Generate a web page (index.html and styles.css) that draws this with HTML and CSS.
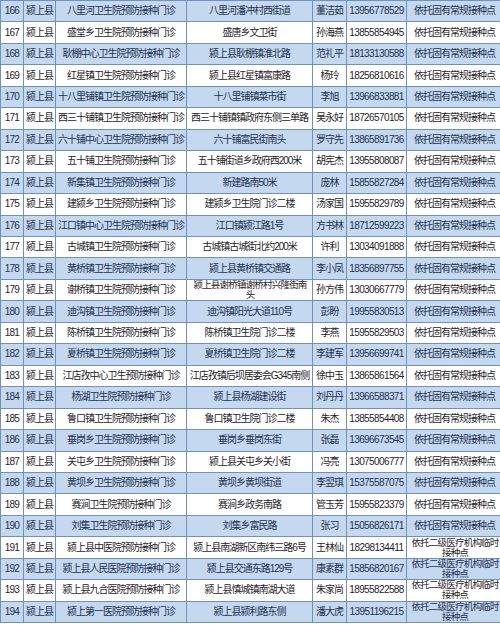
FILE: index.html
```html
<!DOCTYPE html>
<html lang="zh-CN">
<head>
<meta charset="utf-8">
<title>颍上县预防接种门诊</title>
<link rel="stylesheet" href="styles.css">
</head>
<body>
<div class="sheet">
<table class="grid">
<colgroup>
<col class="c-no"><col class="c-county"><col class="c-name"><col class="c-addr"><col class="c-person"><col class="c-phone"><col class="c-type">
</colgroup>
<tbody>
<tr class="alt"><td class="num">166</td><td>颍上县</td><td>八里河卫生院预防接种门诊</td><td>八里河潘冲村西街道</td><td>董洁茹</td><td class="phone">13956778529</td><td>依托固有常规接种点</td></tr>
<tr><td class="num">167</td><td>颍上县</td><td>盛堂乡卫生院预防接种门诊</td><td>盛唐乡文卫街</td><td>孙海燕</td><td class="phone">13855854945</td><td>依托固有常规接种点</td></tr>
<tr class="alt"><td class="num">168</td><td>颍上县</td><td>耿棚中心卫生院预防接种门诊</td><td>颍上县耿棚镇淮北路</td><td>范礼平</td><td class="phone">18133130588</td><td>依托固有常规接种点</td></tr>
<tr><td class="num">169</td><td>颍上县</td><td>红星镇卫生院预防接种门诊</td><td>颍上县红星镇富康路</td><td>杨玲</td><td class="phone">18256810616</td><td>依托固有常规接种点</td></tr>
<tr class="alt"><td class="num">170</td><td>颍上县</td><td>十八里铺镇卫生院预防接种门诊</td><td>十八里铺镇菜市街</td><td>李旭</td><td class="phone">13966833881</td><td>依托固有常规接种点</td></tr>
<tr><td class="num">171</td><td>颍上县</td><td>西三十铺镇卫生院预防接种门诊</td><td>西三十铺镇镇政府东侧三单路</td><td>吴永好</td><td class="phone">18726570105</td><td>依托固有常规接种点</td></tr>
<tr class="alt"><td class="num">172</td><td>颍上县</td><td>六十铺中心卫生院预防接种门诊</td><td>六十铺富民街南头</td><td>罗守先</td><td class="phone">13865891736</td><td>依托固有常规接种点</td></tr>
<tr><td class="num">173</td><td>颍上县</td><td>五十铺卫生院预防接种门诊</td><td>五十铺街道乡政府西200米</td><td>胡宪杰</td><td class="phone">13955808087</td><td>依托固有常规接种点</td></tr>
<tr class="alt"><td class="num">174</td><td>颍上县</td><td>新集镇卫生院预防接种门诊</td><td>新建路南50米</td><td>庞林</td><td class="phone">15855827284</td><td>依托固有常规接种点</td></tr>
<tr><td class="num">175</td><td>颍上县</td><td>建颍乡卫生院预防接种门诊</td><td>建颍乡卫生院门诊二楼</td><td>汤家国</td><td class="phone">15955829789</td><td>依托固有常规接种点</td></tr>
<tr class="alt"><td class="num">176</td><td>颍上县</td><td>江口镇中心卫生院预防接种门诊</td><td>江口镇颍江路1号</td><td>方书林</td><td class="phone">18712599223</td><td>依托固有常规接种点</td></tr>
<tr><td class="num">177</td><td>颍上县</td><td>古城镇卫生院预防接种门诊</td><td>古城镇古城街北约200米</td><td>许利</td><td class="phone">13034091888</td><td>依托固有常规接种点</td></tr>
<tr class="alt"><td class="num">178</td><td>颍上县</td><td>黄桥镇卫生院预防接种门诊</td><td>颍上县黄桥镇交通路</td><td>李小凤</td><td class="phone">18356897755</td><td>依托固有常规接种点</td></tr>
<tr><td class="num">179</td><td>颍上县</td><td>谢桥镇卫生院预防接种门诊</td><td class="two">颍上县谢桥镇谢桥村兴隆街南<br>头</td><td>孙方伟</td><td class="phone">13030667779</td><td>依托固有常规接种点</td></tr>
<tr class="alt"><td class="num">180</td><td>颍上县</td><td>迪沟镇卫生院预防接种门诊</td><td>迪沟镇阳光大道110号</td><td>彭盼</td><td class="phone">19955830513</td><td>依托固有常规接种点</td></tr>
<tr><td class="num">181</td><td>颍上县</td><td>陈桥镇卫生院预防接种门诊</td><td>陈桥镇卫生院门诊二楼</td><td>李燕</td><td class="phone">15955829503</td><td>依托固有常规接种点</td></tr>
<tr class="alt"><td class="num">182</td><td>颍上县</td><td>夏桥镇卫生院预防接种门诊</td><td>夏桥镇卫生院门诊二楼</td><td>李建军</td><td class="phone">13956699741</td><td>依托固有常规接种点</td></tr>
<tr><td class="num">183</td><td>颍上县</td><td>江店孜中心卫生预防接种门诊</td><td>江店孜镇后坝居委会G345南侧</td><td>徐中玉</td><td class="phone">13865861564</td><td>依托固有常规接种点</td></tr>
<tr class="alt"><td class="num">184</td><td>颍上县</td><td>杨湖卫生院预防接种门诊</td><td>颍上县杨湖建设街</td><td>刘丹丹</td><td class="phone">13966588371</td><td>依托固有常规接种点</td></tr>
<tr><td class="num">185</td><td>颍上县</td><td>鲁口镇卫生院预防接种门诊</td><td>鲁口镇卫生院门诊二楼</td><td>朱杰</td><td class="phone">13855854408</td><td>依托固有常规接种点</td></tr>
<tr class="alt"><td class="num">186</td><td>颍上县</td><td>垂岗乡卫生院预防接种门诊</td><td>垂岗乡垂岗东街</td><td>张磊</td><td class="phone">13696673545</td><td>依托固有常规接种点</td></tr>
<tr><td class="num">187</td><td>颍上县</td><td>关屯乡卫生院预防接种门诊</td><td>颍上县关屯乡关小街</td><td>冯亮</td><td class="phone">13075006777</td><td>依托固有常规接种点</td></tr>
<tr class="alt"><td class="num">188</td><td>颍上县</td><td>黄坝乡卫生院预防接种门诊</td><td>黄坝乡黄坝街道</td><td>李翌琪</td><td class="phone">15375587075</td><td>依托固有常规接种点</td></tr>
<tr><td class="num">189</td><td>颍上县</td><td>赛涧卫生院预防接种门诊</td><td>赛涧乡政务南路</td><td>管玉芳</td><td class="phone">15955823379</td><td>依托固有常规接种点</td></tr>
<tr class="alt"><td class="num">190</td><td>颍上县</td><td>刘集卫生院预防接种门诊</td><td>刘集乡富民路</td><td>张习</td><td class="phone">15056826171</td><td>依托固有常规接种点</td></tr>
<tr><td class="num">191</td><td>颍上县</td><td>颍上县中医院预防接种门诊</td><td>颍上县南湖新区南纬三路6号</td><td>王林仙</td><td class="phone">18298134411</td><td class="two">依托二级医疗机构临时<br>接种点</td></tr>
<tr class="alt"><td class="num">192</td><td>颍上县</td><td>颍上县人民医院预防接种门诊</td><td>颍上县交通东路129号</td><td>康素群</td><td class="phone">15856820167</td><td class="two">依托二级医疗机构临时<br>接种点</td></tr>
<tr><td class="num">193</td><td>颍上县</td><td>颍上县九合医院预防接种门诊</td><td>颍上县慎城镇南湖大道</td><td>朱家尚</td><td class="phone">18955822588</td><td class="two">依托二级医疗机构临时<br>接种点</td></tr>
<tr class="alt"><td class="num">194</td><td>颍上县</td><td>颍上第一医院预防接种门诊</td><td>颍上县颍利路东侧</td><td>潘大虎</td><td class="phone">13951196215</td><td class="two">依托二级医疗机构临时<br>接种点</td></tr>
</tbody>
</table>
</div>
</body>
</html>
```
FILE: styles.css
```css
html, body {
  margin: 0;
  padding: 0;
  background: #ffffff;
}
body {
  width: 500px;
  height: 626px;
  overflow: hidden;
}
.sheet {
  width: 500px;
  overflow: hidden;
}
.grid {
  border-collapse: collapse;
  table-layout: fixed;
  width: 502px;
  font-family: "Liberation Sans", "Noto Sans CJK SC", sans-serif;
  font-size: 10px;
  color: #1f2329;
}
.c-no { width: 23px; }
.c-county { width: 32px; }
.c-name { width: 131px; }
.c-addr { width: 126px; }
.c-person { width: 34px; }
.c-phone { width: 60px; }
.c-type { width: 96px; }
.grid tr {
  height: 21.46px;
}
.grid td {
  border: 1px solid #7391b6;
  padding: 0 2px;
  text-align: center;
  vertical-align: middle;
  line-height: 10px;
  letter-spacing: -1px;
  white-space: nowrap;
  overflow: hidden;
}
.grid tr.alt td {
  background: #c4d8ef;
  color: #1e3150;
}
.grid td.num {
  letter-spacing: -0.8px;
  padding: 0;
}
.grid td.phone {
  letter-spacing: -0.6px;
  padding: 0;
}
.grid td.two {
  font-size: 9.5px;
  letter-spacing: -0.8px;
  line-height: 10px;
  padding: 0 0 0 1px;
}
```
